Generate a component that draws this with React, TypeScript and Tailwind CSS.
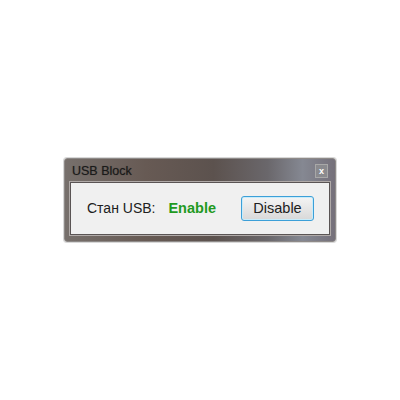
export default function App() {
  return (
    <div className="w-[400px] h-[400px] bg-white pt-[158px] pl-[64px] font-['Liberation_Sans',Arial,sans-serif]">
      <div className="w-[272px] h-[84px] border border-[#8e8a88] rounded-[3px] bg-[linear-gradient(90deg,#77706c_0%,#675a54_30%,#5c524e_55%,#6a676b_75%,#858892_88%,#75707a_100%)] flex flex-col shadow-[0_0_0_1px_#d8d8d8]">
        <div className="h-[23px] flex items-center justify-between pl-[7px] pr-[7px] pt-[1px]">
          <span className="text-[12.5px] text-[#1a1a1a] [text-shadow:0_0_1px_rgba(0,0,0,0.4)]">USB Block</span>
          <div className="w-[13px] h-[14px] border border-[#a8a8a8] bg-[#8a8a8e] flex items-center justify-center">
            <span className="text-[9px] leading-none text-white font-bold">x</span>
          </div>
        </div>
        <div className="flex-1 mx-[5px] mb-[6px] border border-[#5a5454] bg-[#f0f0f0] flex items-center pl-[16px] shadow-[0_0_0_1px_#b0aaa8]">
          <span className="text-[14px] text-[#202020]">Стан USB:</span>
          <span className="ml-[13px] text-[14.5px] font-bold text-[#1f9a1f]">Enable</span>
          <button className="ml-[25px] w-[73px] h-[25px] rounded-[3px] border border-[#3c9fd8] bg-[linear-gradient(#f4f4f4,#e6e6e6_50%,#d8d8d8)] text-[14.5px] text-[#202020] shadow-[inset_0_0_0_1px_#c8ecfa]">
            Disable
          </button>
        </div>
      </div>
    </div>
  );
}
